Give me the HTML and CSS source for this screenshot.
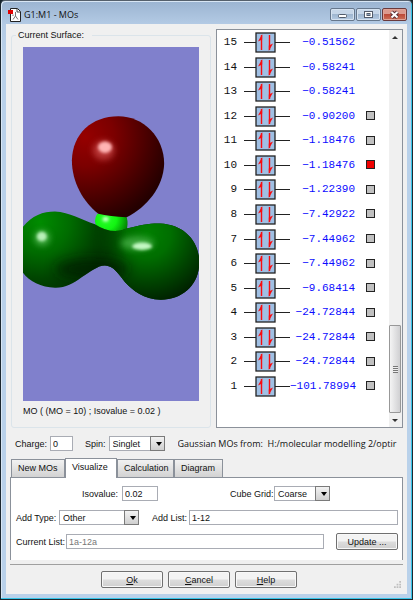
FILE: index.html
```html
<!DOCTYPE html>
<html lang="en">
<head>
<meta charset="utf-8">
<title>G1:M1 - MOs</title>
<link rel="stylesheet" href="styles.css">
</head>
<body>
<div class="window">
  <header class="titlebar">
    <svg class="app-icon" viewBox="0 0 14 14" aria-hidden="true">
      <path d="M2.500 .5H9.500L12.500 3.500V13.500H2.500Z" fill="#fff" stroke="#222"/>
      <path d="M9 1V4H12" fill="none" stroke="#444"/>
      <path d="M7.500 4V8M7.500 8L5 11.500M7.500 8L10 11.500M5 6.500V8" fill="none" stroke="#777"/>
      <path d="M0 2H5V6H0Z" fill="#e00000"/>
    </svg>
    <h1>G1:M1 - MOs</h1>
    <div class="caption-buttons">
      <button type="button" aria-label="Minimize"><svg viewBox="0 0 11 9"><rect x="1.500" y="4.500" width="8" height="3" rx="1" fill="#fff" stroke="#535c6b"/></svg></button>
      <button type="button" aria-label="Maximize"><svg viewBox="0 0 11 9"><rect x="1.500" y="1.500" width="8" height="6" fill="#fff" stroke="#535c6b"/><rect x="4" y="3.500" width="3" height="2" fill="#8ba0b8" stroke="#535c6b"/></svg></button>
      <button type="button" class="close" aria-label="Close"><svg viewBox="0 0 11 9"><path d="M2.500 2L8.500 7.500M8.500 2L2.500 7.500" stroke="#5a3035" stroke-width="4"/><path d="M2.500 2L8.500 7.500M8.500 2L2.500 7.500" stroke="#fff" stroke-width="2"/></svg></button>
    </div>
  </header>

  <main class="client">
    <div class="views">
      <fieldset class="surface">
        <legend>Current Surface:</legend>
        <svg class="canvas" viewBox="0 0 176 353" preserveAspectRatio="xMidYMid slice" role="img" aria-label="Orbital surface">
          <defs>
            <radialGradient id="red" gradientUnits="userSpaceOnUse" cx="225" cy="110" r="290">
              <stop offset="0" stop-color="#960000"/><stop offset=".3" stop-color="#7c0000"/><stop offset=".65" stop-color="#480000"/><stop offset=".9" stop-color="#240000"/>
            </radialGradient>
            <radialGradient id="cap" gradientUnits="userSpaceOnUse" cx="288" cy="355" r="70">
              <stop offset="0" stop-color="#2aff2a"/><stop offset=".45" stop-color="#12f512"/><stop offset="1" stop-color="#007800"/>
            </radialGradient>
            <radialGradient id="left" gradientUnits="userSpaceOnUse" cx="90" cy="365" r="225">
              <stop offset="0" stop-color="#008c00"/><stop offset=".4" stop-color="#006c00"/><stop offset=".75" stop-color="#004400"/><stop offset="1" stop-color="#003000"/>
            </radialGradient>
            <radialGradient id="right" gradientUnits="userSpaceOnUse" cx="410" cy="400" r="205">
              <stop offset="0" stop-color="#008000"/><stop offset=".35" stop-color="#006e00"/><stop offset=".7" stop-color="#004400"/><stop offset="1" stop-color="#002200"/>
            </radialGradient>
            <linearGradient id="blend" gradientUnits="userSpaceOnUse" x1="240" y1="0" x2="350" y2="0">
              <stop offset="0" stop-color="#000"/><stop offset="1" stop-color="#fff"/>
            </linearGradient>
            <mask id="rightSide" maskUnits="userSpaceOnUse" x="0" y="300" width="600" height="320"><rect x="0" y="300" width="600" height="320" fill="url(#blend)"/></mask>
            <filter id="shade" x="-100%" y="-200%" width="300%" height="500%"><feGaussianBlur stdDeviation="18"/></filter>
            <filter id="soft" x="-100%" y="-100%" width="300%" height="300%"><feGaussianBlur stdDeviation="9"/></filter>
            <filter id="spark" x="-100%" y="-100%" width="300%" height="300%"><feGaussianBlur stdDeviation="5"/></filter>
            <path id="lobes" d="M39 380C65 345 100 333 135 333C180 335 215 358 255 371Q305 404 350 384C390 374 420 368 450 369C520 372 567 420 567 485C567 550 520 596 452 597C400 597 370 570 345 545C325 520 310 495 285 495C262 495 240 515 215 530C190 550 165 562 135 561C95 560 55 540 39 515Z"/>
            <clipPath id="lobeClip"><use href="#lobes"/></clipPath>
          </defs>
          <rect width="176" height="353" fill="#8080cc"/>
          <g transform="translate(-13 53) scale(.333333)">
            <path d="M262 340Q305 336 350 350Q356 372 348 392L300 398L262 382Q248 362 262 340Z" fill="url(#cap)"/>
            <ellipse cx="287" cy="356" rx="9" ry="7" fill="#c8ffc8" filter="url(#spark)"/>
            <path d="M325 48C400 48 462 110 462 190C460 260 410 320 350 350Q300 348 265 340C220 305 186 245 186 180C188 100 245 48 325 48Z" fill="url(#red)"/>
            <ellipse cx="281" cy="150" rx="32" ry="29" fill="#d05050" opacity=".7" filter="url(#soft)"/>
            <ellipse cx="285" cy="141" rx="21" ry="17" fill="#ffb4b4" filter="url(#spark)"/>
            <use href="#lobes" fill="url(#left)"/>
            <use href="#lobes" fill="url(#right)" mask="url(#rightSide)"/>
            <g clip-path="url(#lobeClip)">
              <ellipse cx="245" cy="505" rx="110" ry="32" fill="#001c00" opacity=".7" filter="url(#shade)"/>
              <ellipse cx="97" cy="412" rx="23" ry="23" fill="#60c060" opacity=".75" filter="url(#soft)"/>
              <ellipse cx="96" cy="408" rx="15" ry="14" fill="#b8f0b8" filter="url(#spark)"/>
              <ellipse cx="382" cy="428" rx="50" ry="20" fill="#48b048" opacity=".8" filter="url(#soft)"/>
              <ellipse cx="396" cy="437" rx="30" ry="11" fill="#c4f8c4" filter="url(#spark)"/>
            </g>
          </g>
        </svg>
        <p class="caption">MO ( (MO = 10) ; Isovalue = 0.02 )</p>
      </fieldset>

      <div class="orbitals">
        <svg class="symbols" aria-hidden="true">
          <symbol id="pair" viewBox="0 0 46 22">
            <path d="M0 11.500H46" stroke="#222"/>
            <rect x="12" y="2" width="19" height="19" fill="#a0c0e4" stroke="#222" stroke-width="1.300"/>
            <path d="M17.500 19V4M25.500 4V19" stroke="#f80c10" stroke-width="1.400" fill="none"/>
            <path d="M18.200 3V8.500L14 10.500ZM24.800 20V14.500L29 12.500Z" fill="#f80c10"/>
          </symbol>
        </svg>
        <table aria-label="Molecular orbitals">
          <tbody>
            <tr><th>15</th><td class="level"><svg><use href="#pair"/></svg></td><td class="energy">−0.51562</td><td class="pick"></td></tr>
            <tr><th>14</th><td class="level"><svg><use href="#pair"/></svg></td><td class="energy">−0.58241</td><td class="pick"></td></tr>
            <tr><th>13</th><td class="level"><svg><use href="#pair"/></svg></td><td class="energy">−0.58241</td><td class="pick"></td></tr>
            <tr><th>12</th><td class="level"><svg><use href="#pair"/></svg></td><td class="energy">−0.90200</td><td class="pick"><input type="checkbox" aria-label="Orbital 12"></td></tr>
            <tr><th>11</th><td class="level"><svg><use href="#pair"/></svg></td><td class="energy">−1.18476</td><td class="pick"><input type="checkbox" aria-label="Orbital 11"></td></tr>
            <tr><th>10</th><td class="level"><svg><use href="#pair"/></svg></td><td class="energy">−1.18476</td><td class="pick"><input type="checkbox" aria-label="Orbital 10" checked></td></tr>
            <tr><th>9</th><td class="level"><svg><use href="#pair"/></svg></td><td class="energy">−1.22390</td><td class="pick"><input type="checkbox" aria-label="Orbital 9"></td></tr>
            <tr><th>8</th><td class="level"><svg><use href="#pair"/></svg></td><td class="energy">−7.42922</td><td class="pick"><input type="checkbox" aria-label="Orbital 8"></td></tr>
            <tr><th>7</th><td class="level"><svg><use href="#pair"/></svg></td><td class="energy">−7.44962</td><td class="pick"><input type="checkbox" aria-label="Orbital 7"></td></tr>
            <tr><th>6</th><td class="level"><svg><use href="#pair"/></svg></td><td class="energy">−7.44962</td><td class="pick"><input type="checkbox" aria-label="Orbital 6"></td></tr>
            <tr><th>5</th><td class="level"><svg><use href="#pair"/></svg></td><td class="energy">−9.68414</td><td class="pick"><input type="checkbox" aria-label="Orbital 5"></td></tr>
            <tr><th>4</th><td class="level"><svg><use href="#pair"/></svg></td><td class="energy">−24.72844</td><td class="pick"><input type="checkbox" aria-label="Orbital 4"></td></tr>
            <tr><th>3</th><td class="level"><svg><use href="#pair"/></svg></td><td class="energy">−24.72844</td><td class="pick"><input type="checkbox" aria-label="Orbital 3"></td></tr>
            <tr><th>2</th><td class="level"><svg><use href="#pair"/></svg></td><td class="energy">−24.72844</td><td class="pick"><input type="checkbox" aria-label="Orbital 2"></td></tr>
            <tr><th>1</th><td class="level"><svg><use href="#pair"/></svg></td><td class="energy">−101.78994</td><td class="pick"><input type="checkbox" aria-label="Orbital 1"></td></tr>
          </tbody>
        </table>
        <div class="scrollbar" aria-hidden="true">
          <span class="arrow up"></span>
          <span class="track"></span>
          <span class="thumb"></span>
          <span class="arrow down"></span>
        </div>
      </div>
    </div>

    <div class="settings">
      <label for="charge">Charge:</label>
      <input id="charge" class="charge" type="text" value="0">
      <label for="spin">Spin:</label>
      <span class="combo small"><select id="spin"><option>Singlet</option></select></span>
      <span class="source">Gaussian MOs from:&nbsp; H:/molecular modelling 2/optir</span>
    </div>

    <div class="tabs" role="tablist">
      <button type="button" role="tab" class="tab-new">New MOs</button>
      <button type="button" role="tab" class="tab-vis active" aria-selected="true">Visualize</button>
      <button type="button" role="tab" class="tab-calc">Calculation</button>
      <button type="button" role="tab" class="tab-dia">Diagram</button>
    </div>
    <section class="panel" role="tabpanel">
      <div class="row values">
        <label for="iso">Isovalue:</label>
        <input id="iso" class="iso" type="text" value="0.02">
        <label for="grid" class="grid-label">Cube Grid:</label>
        <span class="combo small"><select id="grid"><option>Coarse</option></select></span>
      </div>
      <div class="row">
        <label for="type" class="type-label">Add Type:</label>
        <span class="combo wide"><select id="type"><option>Other</option></select></span>
        <label for="list" class="list-label">Add List:</label>
        <input id="list" class="grow" type="text" value="1-12">
      </div>
      <div class="row">
        <label for="current" class="current-label">Current List:</label>
        <input id="current" class="grow readonly" type="text" value="1a-12a" readonly>
        <button type="button" class="push update">Update ...</button>
      </div>
    </section>

    <footer class="actions">
      <button type="button" class="push"><u>O</u>k</button>
      <button type="button" class="push"><u>C</u>ancel</button>
      <button type="button" class="push"><u>H</u>elp</button>
      <svg class="grip" viewBox="0 0 8 8" aria-hidden="true"><path d="M6 0h2v2h-2zM3 3h2v2h-2zM6 3h2v2h-2zM0 6h2v2h-2zM3 6h2v2h-2zM6 6h2v2h-2z" fill="#bfbfbf"/></svg>
    </footer>
  </main>
</div>
</body>
</html>
```

FILE: styles.css
```css
* { box-sizing: border-box; }

body {
  margin: 0;
  background: #16242c;
  font: 9px/12px "Liberation Sans Narrow", "Liberation Sans", sans-serif;
  color: #111;
}

button, input, select { font: inherit; color: inherit; margin: 0; }

.window {
  display: flex;
  flex-direction: column;
  min-height: 100vh;
  padding: 0 5px 5px 5px;
  border: 1px solid #1c2830;
  border-top-color: #55606c;
  border-radius: 5px 5px 0 0;
  background: linear-gradient(#9bb4d1, #b4cbe5 24px, #b9d1ea 60px);
  box-shadow: inset -1px -1px #35c4e8, inset 1px 1px #d8e6f4;
}

.titlebar {
  display: flex;
  align-items: center;
  gap: 2px;
  height: 23px;
  padding: 4px 0 0 2px;
}
.app-icon { width: 14px; height: 14px; }
.titlebar h1 {
  flex: 1;
  margin: 0;
  font: 9px/14px "Open Sans", "Noto Sans", sans-serif;
}
.caption-buttons { display: flex; gap: 1px; }
.caption-buttons button {
  display: flex;
  align-items: center;
  justify-content: center;
  width: 25px;
  height: 13px;
  padding: 0;
  border: 1px solid #66778c;
  border-radius: 2px;
  background: linear-gradient(#c6d6e8 45%, #9fb6d0 50%, #b4cae2);
  box-shadow: inset 0 0 0 1px #d5e2f0;
}
.caption-buttons .close {
  border-color: #6a3a3c;
  background: linear-gradient(#dc9a8e 45%, #bd4a38 50%, #cc7058);
  box-shadow: inset 0 0 0 1px #e0a498;
}
.caption-buttons svg { width: 11px; height: 9px; }

.client {
  display: flex;
  flex-direction: column;
  flex: 1;
  padding: 5px 4px 0;
  background: #f0f0f0;
}

.views { display: flex; gap: 5px; flex: 1; }

.surface {
  display: flex;
  flex-direction: column;
  flex: 1;
  min-width: 0;
  margin: 0 0 0 1px;
  padding: 6px 11px 10px;
  border: 1px solid #dbe4ea;
  border-radius: 3px;
}
.surface legend { margin-left: -7px; padding: 0 8px 0 2px; }
.canvas { display: block; width: 100%; flex: 1; min-height: 0; }
.caption { margin: 4px 0 0; }

.orbitals {
  display: flex;
  justify-content: space-between;
  width: 187px;
  border: 1px solid #8b919a;
  background: #fff;
}
.symbols { display: none; }
.orbitals table {
  table-layout: fixed;
  width: 158px;
  height: 368px;
  border-collapse: collapse;
  font: 11px/14px "Liberation Mono", monospace;
}
.orbitals th, .orbitals td { padding: 0; font-weight: normal; text-align: right; }
.orbitals th { width: 20px; }
.orbitals .level { width: 53px; }
.level svg { display: block; width: 46px; height: 22px; margin-left: 7px; }
.orbitals .energy { width: 65px; color: #0c0cff; }
.orbitals .pick { width: 20px; }
.pick input {
  display: block;
  appearance: none;
  width: 9px;
  height: 9px;
  margin-left: 11px;
  border: 1px solid #222;
  background: #c0c0c0;
}
.pick input:checked { background: #f00000; }

.scrollbar {
  display: flex;
  flex-direction: column;
  width: 13px;
  padding-right: 1px;
  background: #f0f0f0;
}
.arrow { display: flex; align-items: center; justify-content: center; height: 14px; }
.arrow::after { content: ""; border: 3px solid transparent; }
.up::after { border-bottom-color: #333; border-top: 0; }
.down::after { border-top-color: #333; border-bottom: 0; }
.track { flex: 1; }
.thumb {
  height: 88px;
  border: 1px solid #989898;
  border-radius: 1px;
  background:
    repeating-linear-gradient(#777 0 1px, #eee 1px 2px) center / 5px 7px no-repeat,
    linear-gradient(90deg, #f4f4f4, #d0d0d2);
}

input[type="text"] {
  height: 15px;
  min-width: 0;
  padding: 0 2px;
  border: 1px solid #a9acb4;
  border-radius: 0;
  background: #fff;
}

.combo { position: relative; display: flex; height: 15px; }
.combo.small { width: 56px; }
.combo.wide { width: 80px; }
.combo select {
  appearance: none;
  width: 100%;
  padding: 0 14px 0 3px;
  border: 1px solid #a9acb4;
  border-radius: 0;
  background: #fff;
  line-height: 12px;
}
.combo::before {
  content: "";
  position: absolute;
  inset: 0 0 0 auto;
  width: 13px;
  border: 1px solid #7a7a7a;
  background: linear-gradient(#f2f2f2, #cfcfcf);
  pointer-events: none;
}
.combo::after {
  content: "";
  position: absolute;
  right: 3px;
  top: 6px;
  border: 3px solid transparent;
  border-top: 4px solid #000;
  border-bottom: 0;
  pointer-events: none;
}

.settings {
  display: flex;
  align-items: center;
  margin: 8px 0 7px 5px;
}
.settings label { margin-right: 3px; }
.settings .charge { width: 23px; margin-right: 12px; }
.source {
  flex: 1;
  min-width: 0;
  margin-left: 13px;
  overflow: hidden;
  white-space: nowrap;
  font: 9px/14px "Open Sans", "Noto Sans", sans-serif;
}

.tabs { display: flex; align-items: flex-end; padding-left: 1px; }
.tabs button {
  height: 18px;
  padding: 0 0 1px 6px;
  border: 1px solid #8b919a;
  border-bottom: 0;
  background: linear-gradient(#f2f2f2, #d2d2d2);
  text-align: left;
  white-space: nowrap;
}
.tabs .tab-new { width: 54px; }
.tabs .tab-vis { width: 52px; }
.tabs .tab-calc { width: 57px; }
.tabs .tab-dia { width: 49px; }
.tabs .active { height: 20px; margin-bottom: -1px; padding-bottom: 3px; background: #fff; z-index: 1; }

.panel {
  display: flex;
  flex-direction: column;
  gap: 7px;
  height: 83px;
  padding: 7px 4px 0 5px;
  border: 1px solid #8b919a;
  border-bottom: 0;
  background: #fff;
}
.row { display: flex; align-items: center; height: 17px; white-space: nowrap; }
.values { padding-left: 66px; }
.iso { width: 36px; margin-left: 4px; }
.grid-label { width: 44px; margin-left: 72px; }
.type-label { width: 43px; }
.list-label { width: 37px; margin-left: 13px; }
.current-label { width: 50px; }
.grow { flex: 1; }
input.readonly { color: #777; }

.push {
  width: 62px;
  height: 17px;
  padding: 0;
  border: 1px solid #707070;
  border-radius: 2px;
  background: linear-gradient(#f3f3f3 48%, #dddddd 52%, #cfcfcf);
  box-shadow: inset 0 0 0 1px #f8f8f8;
  line-height: 12px;
}
.update { margin-left: 12px; }

.actions {
  display: flex;
  justify-content: center;
  gap: 5px;
  position: relative;
  margin-top: 4px;
  padding: 6px 15px 6px 0;
  border-top: 1px solid #a0a0a0;
}
.grip { position: absolute; right: 2px; bottom: 6px; width: 7px; height: 7px; }
```
